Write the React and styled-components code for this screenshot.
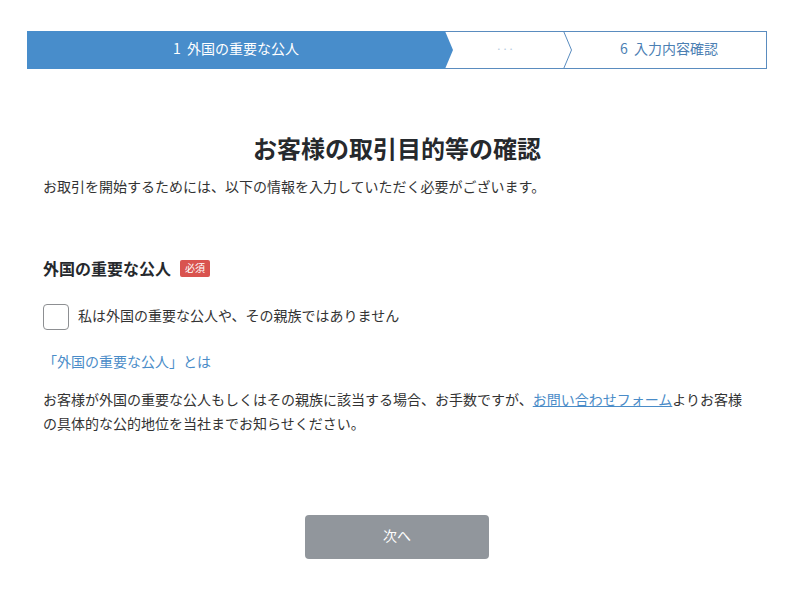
import React from 'react';
import styled, { createGlobalStyle } from 'styled-components';

const GlobalStyle = createGlobalStyle`
  body {
    margin: 0;
    background: #fff;
    font-family: "Noto Sans CJK JP", "Noto Sans", sans-serif;
    color: #333;
  }
`;

const Page = styled.div`
  width: 740px;
  margin-left: 27px;
  padding-top: 31px;
`;

const Stepper = styled.div`
  display: flex;
  height: 38px;
  box-sizing: border-box;
  border: 1px solid #5a8cbf;
`;

const Step = styled.div`
  display: flex;
  align-items: center;
  justify-content: center;
  width: ${(props) => (props.grow ? 'auto' : `${props.width}px`)};
  flex: ${(props) => (props.grow ? 1 : 'none')};
  font-size: ${(props) => (props.muted ? '11px' : '14px')};
  white-space: pre;
  background: ${(props) => (props.active ? '#488dcb' : '#fff')};
  color: ${(props) => (props.active ? '#fff' : props.muted ? '#b5c9dd' : '#4c80b3')};
  margin: ${(props) => (props.active ? '-1px 0 -1px -1px' : '0')};
  padding: 0 ${(props) => (props.muted ? '6px' : '0')} 4px 0;
  box-sizing: border-box;
`;

const Arrow = styled.svg`
  flex: none;
  display: block;
  margin: -1px 0;
`;

const Title = styled.h1`
  margin: 62px 0 0;
  text-align: center;
  font-size: 24px;
  line-height: 34px;
  font-weight: 700;
  color: #26292d;
`;

const Content = styled.div`
  padding: 0 16px;
`;

const Lead = styled.p`
  margin: 9px 0 0;
  font-size: 14px;
  line-height: 24px;
`;

const Heading = styled.div`
  display: flex;
  align-items: center;
  gap: 9px;
  margin-top: 58px;
  font-size: 16px;
  line-height: 24px;
  font-weight: 700;
  color: #26292d;
`;

const Badge = styled.span`
  display: inline-flex;
  align-items: center;
  height: 17px;
  padding: 0 5px;
  border-radius: 2px;
  background: #d9534f;
  color: #fff;
  font-size: 10px;
  font-weight: 400;
`;

const CheckRow = styled.label`
  display: flex;
  align-items: center;
  gap: 9px;
  margin-top: 24px;
  font-size: 14px;
  cursor: pointer;
`;

const Box = styled.span`
  width: 26px;
  height: 26px;
  box-sizing: border-box;
  border: 1px solid #8d8f92;
  border-radius: 4px;
  background: #fff;
`;

const CheckText = styled.span`
  padding-bottom: 4px;
`;

const InfoLink = styled.a`
  display: block;
  margin-top: 19px;
  font-size: 14px;
  line-height: 24px;
  color: #4a8cc8;
  text-decoration: none;
`;

const Note = styled.p`
  margin: 14px 0 0;
  font-size: 14px;
  line-height: 24px;

  a {
    color: #4a8cc8;
    text-decoration: underline;
  }
`;

const Footer = styled.div`
  display: flex;
  justify-content: center;
  margin-top: 80px;
`;

const NextButton = styled.button`
  width: 184px;
  height: 44px;
  padding: 0 0 4px;
  border: none;
  border-radius: 4px;
  background: #91969c;
  color: #fff;
  font-family: inherit;
  font-size: 14px;
`;

const App = () => {
  return (
    <>
      <GlobalStyle />
      <Page>
        <Stepper>
          <Step active width={418}>1  外国の重要な公人</Step>
          <Arrow width="8" height="38" viewBox="0 0 8 38">
            <polygon points="0,0 8,19 0,38" fill="#488dcb" />
          </Arrow>
          <Step muted width={110}>···</Step>
          <Arrow width="9" height="38" viewBox="0 0 9 38">
            <polyline points="0.5,0 8.5,19 0.5,38" fill="none" stroke="#5a8cbf" strokeWidth="1" />
          </Arrow>
          <Step grow>6  入力内容確認</Step>
        </Stepper>

        <Title>お客様の取引目的等の確認</Title>

        <Content>
          <Lead>お取引を開始するためには、以下の情報を入力していただく必要がございます。</Lead>

          <Heading>
            外国の重要な公人
            <Badge>必須</Badge>
          </Heading>

          <CheckRow>
            <Box />
            <CheckText>私は外国の重要な公人や、その親族ではありません</CheckText>
          </CheckRow>

          <InfoLink href="#">「外国の重要な公人」とは</InfoLink>

          <Note>
            お客様が外国の重要な公人もしくはその親族に該当する場合、お手数ですが、<a href="#">お問い合わせフォーム</a>よりお客様の具体的な公的地位を当社までお知らせください。
          </Note>
        </Content>

        <Footer>
          <NextButton>次へ</NextButton>
        </Footer>
      </Page>
    </>
  );
};

export default App;
